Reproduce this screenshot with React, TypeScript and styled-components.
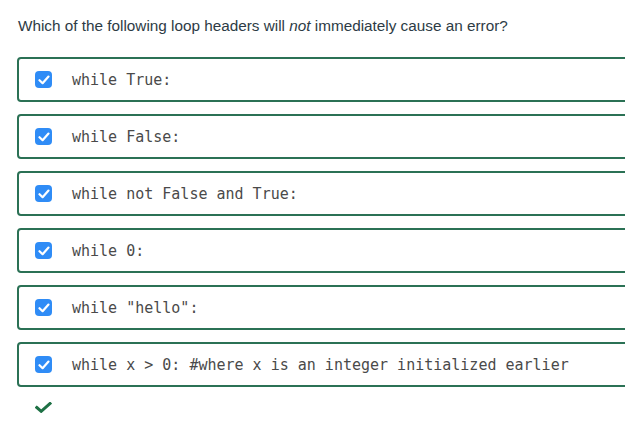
import React from "react";
import styled, { createGlobalStyle } from "styled-components";

const Global = createGlobalStyle`
  html, body { margin: 0; padding: 0; background: #fff; overflow: hidden; }
  body { font-family: "Liberation Sans", Arial, sans-serif; }
`;

const Page = styled.div`
  padding: 16px 0 0 17px;
  width: 625px;
  box-sizing: border-box;
`;

const Question = styled.p`
  margin: 0 0 22px 1px;
  font-size: 15.3px;
  line-height: 19px;
  color: #2d3b45;
`;

const Options = styled.div`
  display: flex;
  flex-direction: column;
  gap: 12px;
  width: 630px;
`;

const Option = styled.label`
  display: flex;
  align-items: center;
  gap: 19px;
  height: 45px;
  box-sizing: border-box;
  border: 2px solid #2b7155;
  border-radius: 4px;
  padding: 0 0 0 16px;
`;

const Box = styled.span`
  width: 17px;
  height: 17px;
  border-radius: 4px;
  background: #2f8cf6;
  display: flex;
  align-items: center;
  justify-content: center;
  flex-shrink: 0;
  margin-right: 1px;
`;

const Code = styled.code`
  font-family: "DejaVu Sans Mono", "Liberation Mono", monospace;
  font-size: 15px;
  color: #4a4a4a;
  white-space: pre;
`;

const Correct = styled.div`
  margin: 15px 0 0 18px;
  height: 12px;
  display: flex;
`;

const options = [
  "while True:",
  "while False:",
  "while not False and True:",
  "while 0:",
  'while "hello":',
  "while x > 0: #where x is an integer initialized earlier",
];

export default function App() {
  return (
    <Page>
      <Global />
      <Question>
        Which of the following loop headers will <em>not</em> immediately cause an error?
      </Question>
      <Options>
        {options.map((o) => (
          <Option key={o}>
            <Box>
              <svg width="12" height="10" viewBox="0 0 12 10">
                <path d="M1.5 5.2 L4.6 8.2 L10.5 1.6" fill="none" stroke="#fff" strokeWidth="2.2" strokeLinecap="round" strokeLinejoin="round" />
              </svg>
            </Box>
            <Code>{o}</Code>
          </Option>
        ))}
      </Options>
      <Correct>
        <svg width="17" height="11" viewBox="0 0 17 11">
          <path d="M1.8 5.5 L6.2 9.3 L15 1.5" fill="none" stroke="#1e7145" strokeWidth="3" strokeLinecap="square" />
        </svg>
      </Correct>
    </Page>
  );
}
